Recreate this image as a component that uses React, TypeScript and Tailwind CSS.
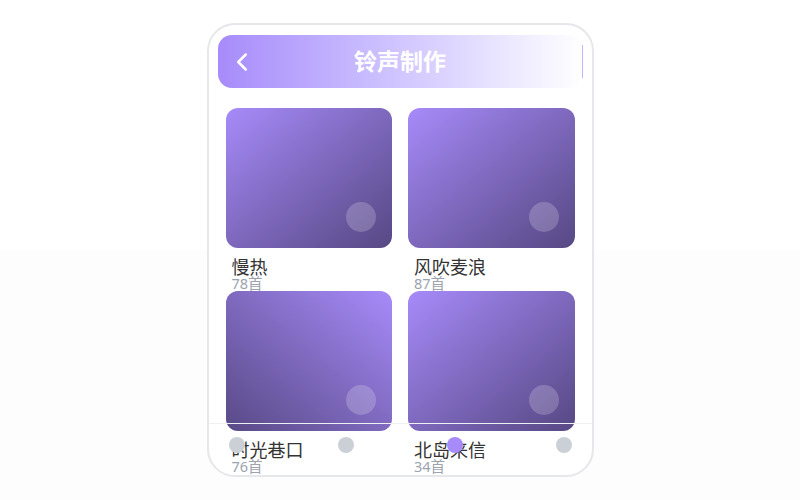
import { ChevronLeft } from "lucide-react";

type Album = {
  id: string;
  title: string;
  count: number;
  flip?: boolean;
};

const albums: Album[] = [
  { id: "a", title: "慢热", count: 78 },
  { id: "b", title: "风吹麦浪", count: 87 },
  { id: "c", title: "时光巷口", count: 76, flip: true },
  { id: "d", title: "北岛来信", count: 34 },
];

const tabs = ["home", "list", "make", "mine"];

export default function App() {
  return (
    <main
      className="flex h-screen w-full items-center justify-center bg-[linear-gradient(to_bottom,#ffffff_50%,#fdfdfd_50%)]"
      style={{ fontFamily: '"Noto Sans", "Noto Sans CJK SC", sans-serif' }}
    >
      <div className="relative h-[454px] w-[387px] overflow-hidden rounded-[28px] border-2 border-[#e6e7ea] bg-white">
        <header className="mx-[9px] mt-[10px] flex h-[53px] items-center rounded-[14px] bg-linear-to-r from-[#a78bfa] to-white">
          <div className="flex w-[48px] items-center pl-[9px] text-white">
            <ChevronLeft size={30} strokeWidth={2} />
          </div>
          <h1 className="flex-1 text-center text-[23px] font-bold leading-none text-white">铃声制作</h1>
          <div className="flex w-[48px] justify-end">
            <span className="h-[33px] w-px bg-[#c4b5fd]" />
          </div>
        </header>

        <section className="mt-[20px] grid grid-cols-2 gap-x-4 px-[17px]">
          {albums.map((album) => (
            <div key={album.id} className="h-[183px]">
              <div
                className={`flex h-[140px] items-end justify-end rounded-xl p-4 ${
                  album.flip
                    ? "bg-linear-to-bl from-[#a78bfa] to-[#594a87]"
                    : "bg-linear-to-br from-[#a78bfa] to-[#574884]"
                }`}
              >
                <span className="h-[30px] w-[30px] rounded-full bg-white/20" />
              </div>
              <div className="px-1.5 pt-[10px]">
                <p className="text-[18px] leading-[18px] text-[#333]">{album.title}</p>
                <p className="text-[14.5px] leading-[15px] text-[#9ca3af]">{album.count}首</p>
              </div>
            </div>
          ))}
        </section>

        <nav className="absolute inset-x-0 bottom-0 flex h-[52px] items-start justify-between border-t border-[#eef0f3] px-5 pt-[13px]">
          {tabs.map((tab) => (
            <span
              key={tab}
              className={`h-4 w-4 rounded-full ${tab === "make" ? "bg-[#a78bfa]" : "bg-[#cbd0d6]"}`}
            />
          ))}
        </nav>
      </div>
    </main>
  );
}
